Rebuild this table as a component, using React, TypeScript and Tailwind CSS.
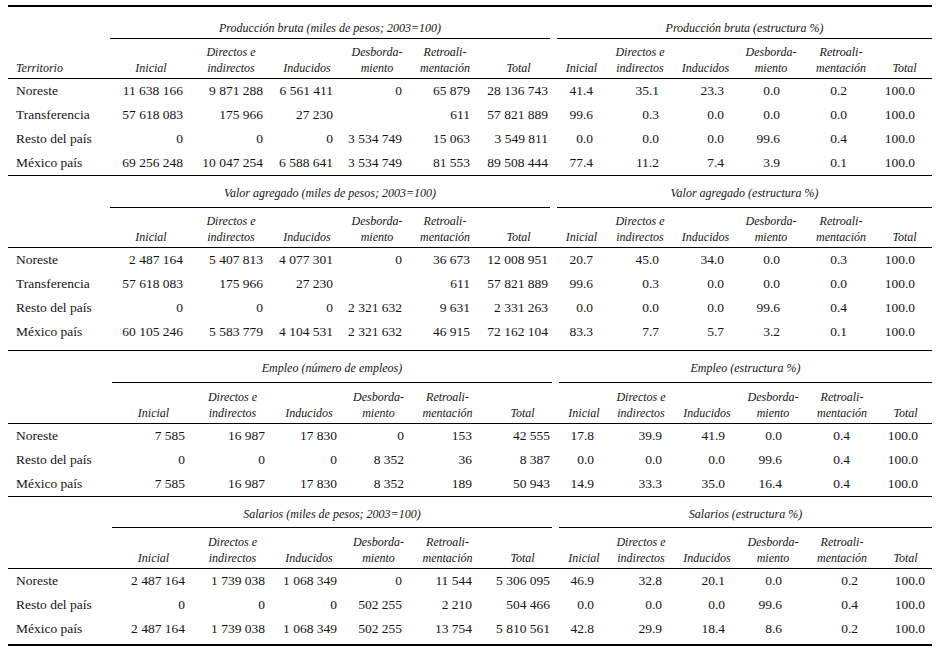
import React from "react";

type Layout = {
  grid: string;
  spacer: string;
  left: string;
  right: string;
  pr: string[];
};

const LA: Layout = {
  grid: "grid grid-cols-[102px_82px_78px_74px_66px_70px_77px_49px_68px_63px_68px_72px_55px]",
  spacer: "w-[102px]",
  left: "w-[447px]",
  right: "w-[375px]",
  pr: ["pr-[9px]", "pr-[7px]", "pr-[11px]", "pr-[8px]", "pr-[10px]", "pr-[9px]", "pr-[13px]", "pr-[15px]", "pr-[13px]", "pr-[25px]", "pr-[30px]", "pr-[17px]"],
};

const LB3: Layout = {
  grid: "grid grid-cols-[104px_83px_75px_78px_61px_77px_73px_50px_64px_68px_64px_74px_53px]",
  spacer: "w-[104px]",
  left: "w-[447px]",
  right: "w-[373px]",
  pr: ["pr-[10px]", "pr-[5px]", "pr-[11px]", "pr-[5px]", "pr-[14px]", "pr-[9px]", "pr-[15px]", "pr-[11px]", "pr-[16px]", "pr-[23px]", "pr-[29px]", "pr-[14px]"],
};

const LB4: Layout = {
  ...LB3,
  pr: ["pr-[10px]", "pr-[5px]", "pr-[11px]", "pr-[7px]", "pr-[14px]", "pr-[9px]", "pr-[15px]", "pr-[11px]", "pr-[16px]", "pr-[23px]", "pr-[21px]", "pr-[7px]"],
};

const HEADERS: string[][] = [
  ["Inicial"],
  ["Directos e", "indirectos"],
  ["Inducidos"],
  ["Desborda-", "miento"],
  ["Retroali-", "mentación"],
  ["Total"],
];

type Block = {
  layout: Layout;
  leftTitle: string;
  rightTitle: string;
  territorio?: boolean;
  wrap: string;
  titleH: string;
  titlePb: string;
  headerH: string;
  rows: [string, string[]][];
};

const BLOCKS: Block[] = [
  {
    layout: LA,
    leftTitle: "Producción bruta (miles de pesos; 2003=100)",
    rightTitle: "Producción bruta (estructura %)",
    territorio: true,
    wrap: "border-t-2 border-black",
    titleH: "h-[32px]",
    titlePb: "pb-[2px]",
    headerH: "h-[40px]",
    rows: [
      ["Noreste", ["11 638 166", "9 871 288", "6 561 411", "0", "65 879", "28 136 743", "41.4", "35.1", "23.3", "0.0", "0.2", "100.0"]],
      ["Transferencia", ["57 618 083", "175 966", "27 230", "", "611", "57 821 889", "99.6", "0.3", "0.0", "0.0", "0.0", "100.0"]],
      ["Resto del país", ["0", "0", "0", "3 534 749", "15 063", "3 549 811", "0.0", "0.0", "0.0", "99.6", "0.4", "100.0"]],
      ["México país", ["69 256 248", "10 047 254", "6 588 641", "3 534 749", "81 553", "89 508 444", "77.4", "11.2", "7.4", "3.9", "0.1", "100.0"]],
    ],
  },
  {
    layout: LA,
    leftTitle: "Valor agregado (miles de pesos; 2003=100)",
    rightTitle: "Valor agregado (estructura %)",
    wrap: "border-t border-black pb-[6px]",
    titleH: "h-[32px]",
    titlePb: "pb-[6px]",
    headerH: "h-[40px]",
    rows: [
      ["Noreste", ["2 487 164", "5 407 813", "4 077 301", "0", "36 673", "12 008 951", "20.7", "45.0", "34.0", "0.0", "0.3", "100.0"]],
      ["Transferencia", ["57 618 083", "175 966", "27 230", "", "611", "57 821 889", "99.6", "0.3", "0.0", "0.0", "0.0", "100.0"]],
      ["Resto del país", ["0", "0", "0", "2 321 632", "9 631", "2 331 263", "0.0", "0.0", "0.0", "99.6", "0.4", "100.0"]],
      ["México país", ["60 105 246", "5 583 779", "4 104 531", "2 321 632", "46 915", "72 162 104", "83.3", "7.7", "5.7", "3.2", "0.1", "100.0"]],
    ],
  },
  {
    layout: LB3,
    leftTitle: "Empleo (número de empleos)",
    rightTitle: "Empleo (estructura %)",
    wrap: "border-t border-black",
    titleH: "h-[32px]",
    titlePb: "pb-[6px]",
    headerH: "h-[41px]",
    rows: [
      ["Noreste", ["7 585", "16 987", "17 830", "0", "153", "42 555", "17.8", "39.9", "41.9", "0.0", "0.4", "100.0"]],
      ["Resto del país", ["0", "0", "0", "8 352", "36", "8 387", "0.0", "0.0", "0.0", "99.6", "0.4", "100.0"]],
      ["México país", ["7 585", "16 987", "17 830", "8 352", "189", "50 943", "14.9", "33.3", "35.0", "16.4", "0.4", "100.0"]],
    ],
  },
  {
    layout: LB4,
    leftTitle: "Salarios (miles de pesos; 2003=100)",
    rightTitle: "Salarios (estructura %)",
    wrap: "border-t border-b-2 border-black pb-[3px]",
    titleH: "h-[31px]",
    titlePb: "pb-[5px]",
    headerH: "h-[41px]",
    rows: [
      ["Noreste", ["2 487 164", "1 739 038", "1 068 349", "0", "11 544", "5 306 095", "46.9", "32.8", "20.1", "0.0", "0.2", "100.0"]],
      ["Resto del país", ["0", "0", "0", "502 255", "2 210", "504 466", "0.0", "0.0", "0.0", "99.6", "0.4", "100.0"]],
      ["México país", ["2 487 164", "1 739 038", "1 068 349", "502 255", "13 754", "5 810 561", "42.8", "29.9", "18.4", "8.6", "0.2", "100.0"]],
    ],
  },
];

function BlockView({ b }: { b: Block }) {
  const L = b.layout;
  const heads = [...HEADERS, ...HEADERS];
  return (
    <div className={b.wrap}>
      <div className={`flex ${b.titleH}`}>
        <div className={L.spacer} />
        <div className={`${L.left} pr-[7px] flex`}>
          <div className={`flex-1 flex items-end justify-center border-b border-black ${b.titlePb} italic text-[12px] leading-[16px]`}>
            {b.leftTitle}
          </div>
        </div>
        <div className={`${L.right} flex`}>
          <div className={`flex-1 flex items-end justify-center border-b border-black ${b.titlePb} italic text-[12px] leading-[16px]`}>
            {b.rightTitle}
          </div>
        </div>
      </div>
      <div className={`${L.grid} ${b.headerH} border-b border-black italic text-[12px] leading-[16px]`}>
        <div className="flex items-end pl-[8px] pb-[2px]">{b.territorio ? "Territorio" : ""}</div>
        {heads.map((h, i) => (
          <div key={i} className="flex flex-col items-center justify-end pb-[2px] whitespace-nowrap">
            {h.map((line, j) => (
              <span key={j}>{line}</span>
            ))}
          </div>
        ))}
      </div>
      {b.rows.map(([label, vals], r) => (
        <div key={r} className={`${L.grid} h-[24px] text-[13.5px] leading-[24px]`}>
          <div className="pl-[8px] whitespace-nowrap">{label}</div>
          {vals.map((v, i) => (
            <div key={i} className={`text-right whitespace-nowrap ${L.pr[i]}`}>
              {v}
            </div>
          ))}
        </div>
      ))}
    </div>
  );
}

export default function App() {
  return (
    <div className="w-[942px] h-[648px] overflow-hidden bg-white px-[8px] pt-[5px] text-[#151515] font-serif">
      <div className="w-[924px] font-[family-name:Liberation_Serif]">
        {BLOCKS.map((b, i) => (
          <BlockView key={i} b={b} />
        ))}
      </div>
    </div>
  );
}
